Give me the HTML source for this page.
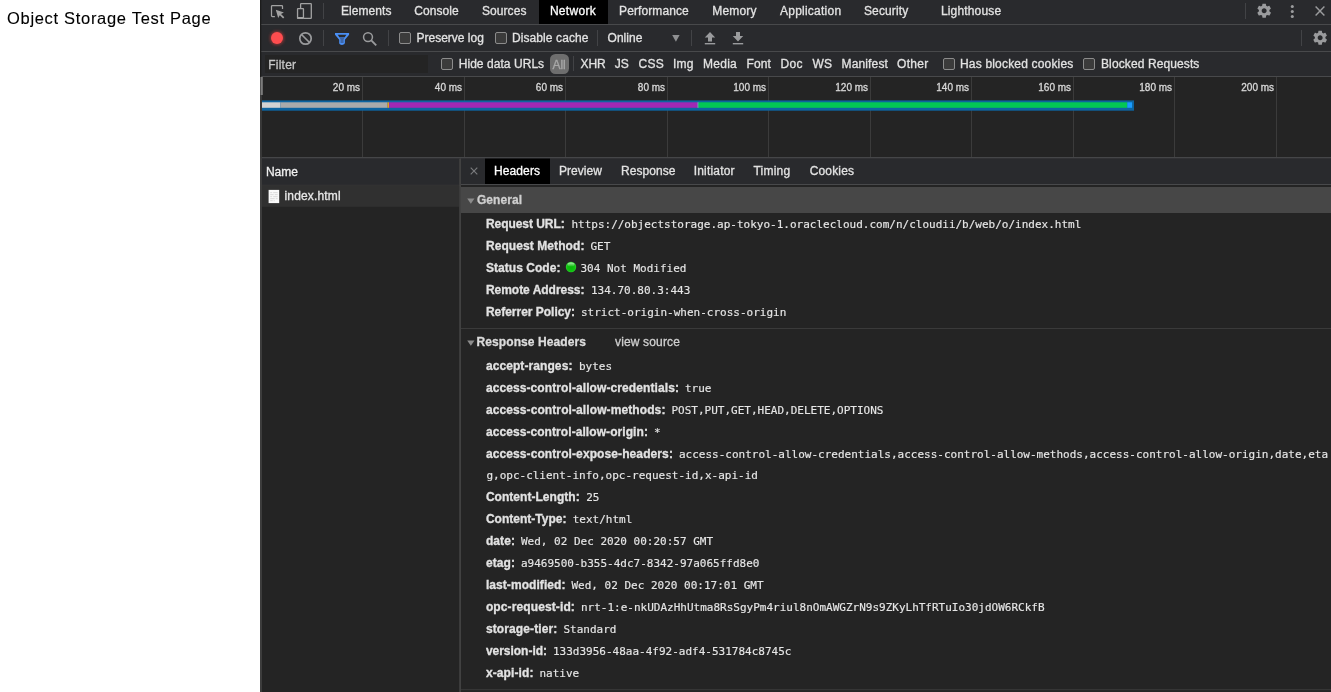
<!DOCTYPE html><html lang="en"><head><meta charset="utf-8"><title>Object Storage Test Page</title><style>
html,body{margin:0;padding:0;}
body{width:1331px;height:692px;overflow:hidden;background:#fff;position:relative;font-family:"Liberation Sans", sans-serif;font-size:12px;}
#root{position:absolute;left:0;top:0;width:1331px;height:692px;overflow:hidden;will-change:transform;transform:translateZ(0);}
#root div,#root span,#root svg{position:absolute;}
.t{-webkit-text-stroke:0.3px currentColor;white-space:pre;line-height:16px;color:#d0d0d0;font-size:12px;font-family:"Liberation Sans", sans-serif;transform-origin:0 50%;}
.tab{color:#e2e2e2;}
.sel{color:#ffffff;}
.b{font-weight:bold;color:#e2e2e2;}
.m{font-family:"DejaVu Sans Mono", "Liberation Mono", monospace;font-size:11px;color:#e6e6e6;-webkit-text-stroke:0.15px currentColor;}
.lbl{font-size:10px;color:#d8d8d8;}
.cb{box-sizing:border-box;border:1px solid #8c8c8c;border-radius:2px;background:#3b3b3b;}
</style></head><body><div id="root">
<span class="t" id="pagetitle" style="left:7px;top:6px;-webkit-text-stroke:0.1px #000;font-size:16.5px;line-height:24px;color:#000;letter-spacing:0.69px;">Object Storage Test Page</span>
<svg style="left:0;top:0" width="1331" height="692" viewBox="0 0 1331 692"><rect x="260" y="0" width="1071" height="692" fill="#242424"/><rect x="261" y="0" width="1070" height="24" fill="#292a2d"/><rect x="261" y="24" width="1070" height="1" fill="#48494b"/><rect x="261" y="25" width="1070" height="26" fill="#292a2d"/><rect x="261" y="51" width="1070" height="1" fill="#48494b"/><rect x="261" y="52" width="1070" height="24" fill="#292a2d"/><rect x="261" y="76" width="1070" height="1" fill="#48494b"/><rect x="323" y="3" width="1" height="16" fill="#424346"/><rect x="539" y="0" width="69" height="24" fill="#000000"/><rect x="1245" y="3" width="1" height="16" fill="#424346"/><rect x="323" y="30" width="1" height="16" fill="#424346"/><rect x="388" y="30" width="1" height="16" fill="#424346"/><rect x="597" y="30" width="1" height="16" fill="#424346"/><rect x="691" y="30" width="1" height="16" fill="#424346"/><rect x="1301" y="30" width="1" height="16" fill="#424346"/><rect x="265" y="55" width="163" height="18" fill="#242424"/><rect x="573" y="56" width="1" height="15" fill="#424346"/><rect x="261" y="77" width="1070" height="80" fill="#242424"/><rect x="261" y="157" width="1070" height="1.6" fill="#454648"/><rect x="362" y="77" width="1" height="80" fill="#3b3b3b"/><rect x="464" y="77" width="1" height="80" fill="#3b3b3b"/><rect x="565" y="77" width="1" height="80" fill="#3b3b3b"/><rect x="667" y="77" width="1" height="80" fill="#3b3b3b"/><rect x="768" y="77" width="1" height="80" fill="#3b3b3b"/><rect x="870" y="77" width="1" height="80" fill="#3b3b3b"/><rect x="971" y="77" width="1" height="80" fill="#3b3b3b"/><rect x="1073" y="77" width="1" height="80" fill="#3b3b3b"/><rect x="1174" y="77" width="1" height="80" fill="#3b3b3b"/><rect x="1276" y="77" width="1" height="80" fill="#3b3b3b"/><rect x="261" y="100.4" width="873" height="10.3" fill="#0d64a0"/><rect x="262" y="102.3" width="18.4" height="5.5" fill="#d2d2d2"/><rect x="280.4" y="102.3" width="107" height="5.5" fill="#ababab"/><rect x="387.4" y="102.3" width="1.8" height="5.5" fill="#e8a020"/><rect x="389.2" y="102.3" width="308.5" height="5.5" fill="#a028b4"/><rect x="697.7" y="102.3" width="0.8" height="5.5" fill="#c9c9d9"/><rect x="698.5" y="102.3" width="428.8" height="5.5" fill="#03c755"/><rect x="1127.3" y="102.3" width="4.8" height="5.5" fill="#1a9cff"/><rect x="261" y="158.6" width="199" height="26.2" fill="#292a2d"/><rect x="261" y="184.7" width="199" height="1" fill="#3b3b3b"/><rect x="261" y="185.7" width="198" height="21.1" fill="#303030"/><rect x="459.2" y="158.6" width="1.8" height="534" fill="#414141"/><rect x="461" y="158.6" width="870" height="25.4" fill="#292a2d"/><rect x="461" y="184" width="870" height="1" fill="#48494b"/><rect x="485" y="158.6" width="65" height="25.4" fill="#000"/><rect x="461" y="187" width="870" height="26" fill="#474747"/><rect x="461" y="328" width="870" height="1" fill="#3a3a3a"/><rect x="461" y="689.2" width="870" height="1" fill="#3a3a3a"/><rect x="260" y="0" width="1.3" height="77" fill="#1c1c1c"/><rect x="260" y="77" width="2" height="80" fill="#383838"/><rect x="260.6" y="77" width="2.2" height="18" fill="#7c7c7c"/><rect x="260" y="157" width="2" height="535" fill="#3d3d3d"/></svg>
<svg style="left:270px;top:4px" width="16" height="16" viewBox="0 0 16 16"><path d="M4.900 12.500H2.400a.9.9 0 0 1-.9-.9V2.400a.9.9 0 0 1 .9-.9h9.200a.9.9 0 0 1 .9.9V5.100" fill="none" stroke="#a2a2a2" stroke-width="1.250"/><path d="M5.800 5.800L13.900 8.400L11 10L14.300 13.300L13.100 14.500L9.800 11.200L8.200 14z" fill="#a2a2a2"/></svg>
<svg style="left:296px;top:2px" width="18" height="18" viewBox="0 0 18 18"><path d="M4.600 6V2.200a.6.6 0 0 1 .6-.6h9.500a.6.6 0 0 1 .6.6v13.600a.6.6 0 0 1-.6.6H8" fill="none" stroke="#a2a2a2" stroke-width="1.300"/><rect x="1.550" y="6.550" width="5.900" height="9.900" rx="0.400" fill="none" stroke="#a2a2a2" stroke-width="1.300"/><rect x="1.500" y="15" width="6" height="1.900" fill="#a2a2a2"/></svg>
<span class="t tab" style="letter-spacing:0.071px;margin-left:-0.5px;left:341.4px;top:3px;">Elements</span>
<span class="t tab" style="letter-spacing:0.096px;margin-left:-0.5px;left:414.7px;top:3px;">Console</span>
<span class="t tab" style="letter-spacing:0.067px;margin-left:-0.5px;left:482.5px;top:3px;">Sources</span>
<span class="t tab sel" style="letter-spacing:0.312px;margin-left:-0.5px;left:550.4px;top:3px;">Network</span>
<span class="t tab" style="letter-spacing:0.100px;margin-left:-0.5px;left:619.6px;top:3px;">Performance</span>
<span class="t tab" style="letter-spacing:0.193px;margin-left:-0.5px;left:712.7px;top:3px;">Memory</span>
<span class="t tab" style="letter-spacing:0.235px;margin-left:-0.5px;left:780.5px;top:3px;">Application</span>
<span class="t tab" style="letter-spacing:0.155px;margin-left:-0.5px;left:864.4px;top:3px;">Security</span>
<span class="t tab" style="letter-spacing:0.168px;margin-left:-0.5px;left:941.4px;top:3px;">Lighthouse</span>
<svg style="left:1255.7px;top:3.3px" width="16.3" height="15.4" viewBox="0 0 17 16"><path d="M13.9 8.7c0-.2.1-.5.1-.7s0-.5-.1-.7l1.500-1.200c.1-.1.200-.300.100-.500l-1.400-2.500c-.1-.2-.3-.2-.500-.2l-1.800.7c-.4-.3-.8-.5-1.200-.7l-.3-1.900c0-.2-.2-.3-.4-.3H7.100c-.2 0-.4.100-.4.300l-.3 1.900c-.4.200-.8.400-1.200.7l-1.800-.7c-.2-.1-.4 0-.5.200L1.500 5.600c-.1.200-.1.400.1.500l1.500 1.200c0 .2-.1.500-.1.700s0 .5.100.7l-1.500 1.200c-.1.100-.2.300-.1.500l1.400 2.500c.1.200.3.200.5.200l1.800-.7c.4.300.8.500 1.200.7l.3 1.900c0 .2.200.3.400.3h2.800c.2 0 .4-.1.400-.3l.3-1.900c.4-.2.800-.4 1.200-.7l1.800.7c.2.100.4 0 .5-.2l1.400-2.500c.1-.2.100-.4-.1-.5l-1.500-1.200zM8.500 10.600c-1.400 0-2.600-1.200-2.600-2.600s1.200-2.600 2.600-2.600 2.600 1.200 2.600 2.600-1.200 2.600-2.600 2.600z" fill="#9a9b9d"/></svg>
<svg style="left:1288.4px;top:3px" width="8" height="18" viewBox="0 0 8 18"><circle cx="4.300" cy="3.5" r="1.550" fill="#9a9b9d"/><circle cx="4.300" cy="8.500" r="1.550" fill="#9a9b9d"/><circle cx="4.300" cy="13.5" r="1.550" fill="#9a9b9d"/></svg>
<svg style="left:1313px;top:5px" width="14" height="14" viewBox="0 0 14 14"><path d="M2.600 1.500L11.400 10.400M11.400 1.500L2.600 10.400" stroke="#9a9b9d" stroke-width="1.450" fill="none"/></svg>
<svg style="left:266px;top:27px" width="22" height="22" viewBox="0 0 22 22"><defs><filter id="gl" x="-50%" y="-50%" width="200%" height="200%"><feGaussianBlur stdDeviation="1.4"/></filter></defs><circle cx="11" cy="11" r="7" fill="#d93a3a" opacity=".6" filter="url(#gl)"/><circle cx="11" cy="11" r="6" fill="#ff4d4f"/></svg>
<svg style="left:298px;top:31px" width="15" height="15" viewBox="0 0 15 15"><circle cx="7.5" cy="7.500" r="5.700" fill="none" stroke="#9a9b9d" stroke-width="1.700"/><path d="M3.500 3.500L11.500 11.500" stroke="#9a9b9d" stroke-width="1.700"/></svg>
<svg style="left:333px;top:31px" width="18" height="16" viewBox="0 0 18 16"><path d="M2 1.900h14.100v1.900L11.900 8.800v3.300q0 1.800-2.850 1.800q-2.850 0-2.850-1.800V8.800L2 3.800z" fill="#4a8ff5"/><path d="M4.700 3.700h8.700L11.700 6.200H6.400z" fill="#292a2d"/><path d="M6.400 6.200h5.300L10.600 8.600v3.400H7.500V8.600z" fill="#3d66a8"/></svg>
<svg style="left:361px;top:30px" width="18" height="18" viewBox="0 0 18 18"><circle cx="7" cy="7.100" r="4.450" fill="none" stroke="#9a9b9d" stroke-width="1.500"/><path d="M10.300 10.400L15.200 15.300" stroke="#9a9b9d" stroke-width="1.900"/></svg>
<div class="cb" style="left:399px;top:32px;width:12px;height:12px;"></div>
<span class="t tab" style="letter-spacing:0.002px;margin-left:-0.5px;left:417px;top:30px;">Preserve log</span>
<div class="cb" style="left:495px;top:32px;width:12px;height:12px;"></div>
<span class="t tab" style="letter-spacing:0.087px;margin-left:-0.5px;left:512.5px;top:30px;">Disable cache</span>
<span class="t tab" style="letter-spacing:0.052px;margin-left:-0.5px;left:608px;top:30px;">Online</span>
<svg style="left:671.600px;top:35px" width="8" height="7" viewBox="0 0 8 7"><path d="M0.200 0.100h7.400L3.900 6.700z" fill="#8f9092"/></svg>
<svg style="left:703px;top:31px" width="14" height="15" viewBox="0 0 14 15"><path d="M7 1L1.800 6.500H5v4h4v-4h3.200z" fill="#9a9b9d"/><rect x="1.800" y="12" width="10.400" height="1.400" fill="#9a9b9d"/></svg>
<svg style="left:731px;top:31px" width="14" height="15" viewBox="0 0 14 15"><path d="M7 10.500L1.800 5H5V1h4v4h3.200z" fill="#9a9b9d"/><rect x="1.800" y="12" width="10.400" height="1.400" fill="#9a9b9d"/></svg>
<svg style="left:1311.7px;top:30.3px" width="16.3" height="15.4" viewBox="0 0 17 16"><path d="M13.9 8.7c0-.2.1-.5.1-.7s0-.5-.1-.7l1.500-1.200c.1-.1.200-.300.100-.500l-1.400-2.500c-.1-.2-.3-.2-.500-.2l-1.800.7c-.4-.3-.8-.5-1.200-.7l-.3-1.900c0-.2-.2-.3-.4-.3H7.100c-.2 0-.4.100-.4.300l-.3 1.900c-.4.200-.8.400-1.200.7l-1.800-.7c-.2-.1-.4 0-.5.200L1.500 5.600c-.1.200-.1.400.1.500l1.500 1.200c0 .2-.1.500-.1.700s0 .5.100.7l-1.500 1.200c-.1.100-.2.300-.1.500l1.400 2.500c.1.200.3.200.5.200l1.800-.7c.4.300.8.500 1.200.7l.3 1.900c0 .2.200.3.400.3h2.800c.2 0 .4-.1.400-.3l.3-1.900c.4-.2.800-.4 1.200-.7l1.800.7c.2.100.4 0 .5-.2l1.400-2.500c.1-.2.100-.4-.1-.5l-1.500-1.200zM8.500 10.600c-1.400 0-2.600-1.200-2.600-2.600s1.200-2.600 2.600-2.600 2.600 1.200 2.600 2.600-1.200 2.600-2.600 2.600z" fill="#9a9b9d"/></svg>
<span class="t" style="letter-spacing:0.221px;margin-left:-0.5px;left:268.8px;top:57px;color:#c8c8c8;">Filter</span>
<div class="cb" style="left:441px;top:58px;width:12px;height:12px;"></div>
<span class="t tab" style="letter-spacing:0.056px;margin-left:-0.5px;left:459.2px;top:56px;">Hide data URLs</span>
<div style="left:550px;top:54px;width:19.2px;height:20px;border-radius:5.5px;background:#6e6e6e;"></div>
<span class="t" style="letter-spacing:-0.015px;margin-left:-0.5px;left:552.9px;top:57px;color:#a8a8a8;">All</span>
<span class="t tab" style="letter-spacing:-0.115px;margin-left:-0.5px;left:581px;top:56px;">XHR</span>
<span class="t tab" style="letter-spacing:0.142px;margin-left:-0.5px;left:615.2px;top:56px;">JS</span>
<span class="t tab" style="letter-spacing:0.271px;margin-left:-0.5px;left:639px;top:56px;">CSS</span>
<span class="t tab" style="letter-spacing:0.161px;margin-left:-0.5px;left:673.5px;top:56px;">Img</span>
<span class="t tab" style="letter-spacing:0.263px;margin-left:-0.5px;left:703.5px;top:56px;">Media</span>
<span class="t tab" style="letter-spacing:0.121px;margin-left:-0.5px;left:747px;top:56px;">Font</span>
<span class="t tab" style="letter-spacing:0.385px;margin-left:-0.5px;left:781px;top:56px;">Doc</span>
<span class="t tab" style="letter-spacing:0.078px;margin-left:-0.5px;left:813px;top:56px;">WS</span>
<span class="t tab" style="letter-spacing:0.143px;margin-left:-0.5px;left:842px;top:56px;">Manifest</span>
<span class="t tab" style="letter-spacing:0.297px;margin-left:-0.5px;left:897.5px;top:56px;">Other</span>
<div class="cb" style="left:943px;top:58px;width:12px;height:12px;"></div>
<span class="t tab" style="letter-spacing:0.181px;margin-left:-0.5px;left:960.5px;top:56px;">Has blocked cookies</span>
<div class="cb" style="left:1083px;top:58px;width:12px;height:12px;"></div>
<span class="t tab" style="letter-spacing:0.110px;margin-left:-0.5px;left:1101.5px;top:56px;">Blocked Requests</span>
<span class="t lbl" style="left:300.1px;top:80px;width:60px;text-align:right;">20 ms</span>
<span class="t lbl" style="left:402.1px;top:80px;width:60px;text-align:right;">40 ms</span>
<span class="t lbl" style="left:503.1px;top:80px;width:60px;text-align:right;">60 ms</span>
<span class="t lbl" style="left:605.1px;top:80px;width:60px;text-align:right;">80 ms</span>
<span class="t lbl" style="left:706.1px;top:80px;width:60px;text-align:right;">100 ms</span>
<span class="t lbl" style="left:808.1px;top:80px;width:60px;text-align:right;">120 ms</span>
<span class="t lbl" style="left:909.1px;top:80px;width:60px;text-align:right;">140 ms</span>
<span class="t lbl" style="left:1011.1px;top:80px;width:60px;text-align:right;">160 ms</span>
<span class="t lbl" style="left:1112.1px;top:80px;width:60px;text-align:right;">180 ms</span>
<span class="t lbl" style="left:1214.1px;top:80px;width:60px;text-align:right;">200 ms</span>
<span class="t" style="letter-spacing:0.046px;margin-left:-0.5px;left:266.4px;top:164px;color:#f0f0f0;">Name</span>
<svg style="left:268px;top:189px" width="13" height="16" viewBox="0 0 13 16"><rect x="0.600" y="0.900" width="10.600" height="13.200" fill="#fafafa"/><path d="M2.200 3.700h2M5.200 3.700h4.500M2.200 5.700h3.500M6.700 5.700h3M2.200 7.700h2M5.200 7.700h4.500M2.200 9.700h4.500M7.700 9.700h2M2.200 11.700h2.500M5.700 11.700h1" stroke="#d4d4d4" stroke-width=".9"/></svg>
<span class="t" style="letter-spacing:0.160px;margin-left:-0.5px;left:285px;top:188px;color:#e8e8e8;">index.html</span>
<svg style="left:469px;top:166px" width="10" height="10" viewBox="0 0 10 10"><path d="M1.700 1.700L8.300 8.300M8.300 1.700L1.700 8.300" stroke="#7a7b7d" stroke-width="1.150" fill="none"/></svg>
<span class="t tab sel" style="letter-spacing:0.106px;margin-left:-0.5px;left:494.5px;top:163px;">Headers</span>
<span class="t tab" style="letter-spacing:0.059px;margin-left:-0.5px;left:559.4px;top:163px;">Preview</span>
<span class="t tab" style="letter-spacing:0.044px;margin-left:-0.5px;left:621.6px;top:163px;">Response</span>
<span class="t tab" style="letter-spacing:0.182px;margin-left:-0.5px;left:694.2px;top:163px;">Initiator</span>
<span class="t tab" style="letter-spacing:0.206px;margin-left:-0.5px;left:754.0px;top:163px;">Timing</span>
<span class="t tab" style="letter-spacing:0.163px;margin-left:-0.5px;left:810.2px;top:163px;">Cookies</span>
<svg style="left:466.5px;top:197.5px" width="8" height="6" viewBox="0 0 8 6"><path d="M0.200 0.400h7.300L3.850 5.700z" fill="#8c8c8c"/></svg>
<span class="t b" style="letter-spacing:0.071px;margin-left:-0.5px;left:477.4px;top:192px;color:#cfcfcf;">General</span>
<span class="t b" style="letter-spacing:-0.045px;margin-left:-0.5px;left:486.4px;top:216px;">Request URL:</span>
<span class="t m" style="left:571.4px;top:216.5px;">https://objectstorage.ap-tokyo-1.oraclecloud.com/n/cloudii/b/web/o/index.html</span>
<span class="t b" style="letter-spacing:0.084px;margin-left:-0.5px;left:486.4px;top:238px;">Request Method:</span>
<span class="t m" style="left:590.5px;top:238.5px;">GET</span>
<span class="t b" style="letter-spacing:0.049px;margin-left:-0.5px;left:486.4px;top:260px;">Status Code:</span>
<span class="t m" style="left:580.5px;top:260.5px;">304 Not Modified</span>
<span class="t b" style="letter-spacing:-0.021px;margin-left:-0.5px;left:486.4px;top:282px;">Remote Address:</span>
<span class="t m" style="left:591px;top:282.5px;">134.70.80.3:443</span>
<span class="t b" style="letter-spacing:-0.017px;margin-left:-0.5px;left:486.4px;top:304px;">Referrer Policy:</span>
<span class="t m" style="left:581px;top:304.5px;">strict-origin-when-cross-origin</span>
<svg style="left:565px;top:261px" width="12" height="12" viewBox="0 0 12 12"><defs><radialGradient id="gg" cx="50%" cy="55%" r="55%"><stop offset="0" stop-color="#08b808"/><stop offset=".65" stop-color="#10c210"/><stop offset="1" stop-color="#3ad83a"/></radialGradient><linearGradient id="gh" x1="0" y1="0" x2="0" y2="1"><stop offset="0" stop-color="#ffffff" stop-opacity=".65"/><stop offset="1" stop-color="#ffffff" stop-opacity="0"/></linearGradient></defs><circle cx="6" cy="6" r="5.200" fill="url(#gg)"/><ellipse cx="6" cy="3.600" rx="3.400" ry="2.200" fill="url(#gh)"/></svg>
<svg style="left:466.5px;top:339.5px" width="8" height="6" viewBox="0 0 8 6"><path d="M0.200 0.400h7.300L3.850 5.700z" fill="#8c8c8c"/></svg>
<span class="t b" style="letter-spacing:0.091px;margin-left:-0.5px;left:477px;top:334px;color:#dcdcdc;">Response Headers</span>
<span class="t" style="letter-spacing:0.149px;margin-left:-0.5px;left:615.5px;top:334px;color:#d0d0d0;">view source</span>
<span class="t b" style="letter-spacing:0.087px;margin-left:-0.5px;left:486.4px;top:358px;">accept-ranges:</span>
<span class="t m" style="left:579px;top:358.5px;">bytes</span>
<span class="t b" style="letter-spacing:0.092px;margin-left:-0.5px;left:486.4px;top:380px;">access-control-allow-credentials:</span>
<span class="t m" style="left:685px;top:380.5px;">true</span>
<span class="t b" style="letter-spacing:0.100px;margin-left:-0.5px;left:486.4px;top:402px;">access-control-allow-methods:</span>
<span class="t m" style="left:671.5px;top:402.5px;">POST,PUT,GET,HEAD,DELETE,OPTIONS</span>
<span class="t b" style="letter-spacing:0.074px;margin-left:-0.5px;left:486.4px;top:424px;">access-control-allow-origin:</span>
<span class="t m" style="left:654px;top:424.5px;">*</span>
<span class="t b" style="letter-spacing:0.101px;margin-left:-0.5px;left:486.4px;top:446px;">access-control-expose-headers:</span>
<span class="t m" style="left:679px;top:446.5px;">access-control-allow-credentials,access-control-allow-methods,access-control-allow-origin,date,eta</span>
<span class="t b" style="letter-spacing:0.032px;margin-left:-0.5px;left:486.4px;top:489px;">Content-Length:</span>
<span class="t m" style="left:586.2px;top:489.5px;">25</span>
<span class="t b" style="letter-spacing:0.012px;margin-left:-0.5px;left:486.4px;top:511px;">Content-Type:</span>
<span class="t m" style="left:572.7px;top:511.5px;">text/html</span>
<span class="t b" style="letter-spacing:0.086px;margin-left:-0.5px;left:486.4px;top:533px;">date:</span>
<span class="t m" style="left:521px;top:533.5px;">Wed, 02 Dec 2020 00:20:57 GMT</span>
<span class="t b" style="letter-spacing:0.086px;margin-left:-0.5px;left:486.4px;top:555px;">etag:</span>
<span class="t m" style="left:521px;top:555.5px;">a9469500-b355-4dc7-8342-97a065ffd8e0</span>
<span class="t b" style="letter-spacing:0.066px;margin-left:-0.5px;left:486.4px;top:577px;">last-modified:</span>
<span class="t m" style="left:571.5px;top:577.5px;">Wed, 02 Dec 2020 00:17:01 GMT</span>
<span class="t b" style="letter-spacing:0.117px;margin-left:-0.5px;left:486.4px;top:599px;">opc-request-id:</span>
<span class="t m" style="left:581px;top:599.5px;">nrt-1:e-nkUDAzHhUtma8RsSgyPm4riul8nOmAWGZrN9s9ZKyLhTfRTuIo30jdOW6RCkfB</span>
<span class="t b" style="letter-spacing:0.122px;margin-left:-0.5px;left:486.4px;top:621px;">storage-tier:</span>
<span class="t m" style="left:563.5px;top:621.5px;">Standard</span>
<span class="t b" style="letter-spacing:-0.022px;margin-left:-0.5px;left:486.4px;top:643px;">version-id:</span>
<span class="t m" style="left:553px;top:643.5px;">133d3956-48aa-4f92-adf4-531784c8745c</span>
<span class="t b" style="letter-spacing:0.103px;margin-left:-0.5px;left:486.4px;top:665px;">x-api-id:</span>
<span class="t m" style="left:539.5px;top:665.5px;">native</span>
<span class="t m" style="left:486.4px;top:467.500px;">g,opc-client-info,opc-request-id,x-api-id</span>
</div></body></html>
